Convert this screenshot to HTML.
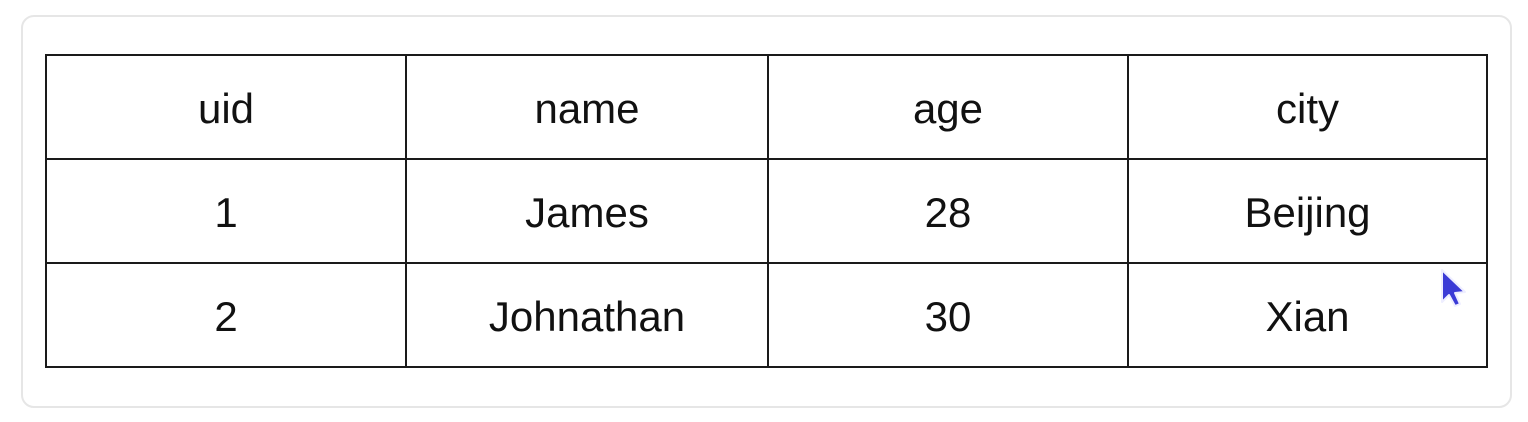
<!DOCTYPE html>
<html><head><style>
html,body{margin:0;padding:0;background:#fff;width:1528px;height:422px;overflow:hidden}
.card{position:absolute;left:21px;top:15px;width:1491px;height:393px;border:2px solid #e6e6e6;border-radius:13px;box-sizing:border-box}
table{position:absolute;left:45px;top:54px;border-collapse:collapse;font-family:"Liberation Sans",sans-serif;font-size:42px;color:#111}
td{border:2px solid #1a1a1a;text-align:center;padding:3px 0 0 0;height:99px}
</style></head><body>
<div class="card"></div>
<table>
<tr><td style="width:358px">uid</td><td style="width:360px">name</td><td style="width:358px">age</td><td style="width:357px">city</td></tr>
<tr><td>1</td><td>James</td><td>28</td><td>Beijing</td></tr>
<tr><td>2</td><td>Johnathan</td><td>30</td><td>Xian</td></tr>
</table>
<svg style="position:absolute;left:1437px;top:266px" width="36" height="46" viewBox="0 0 36 46">
<path d="M5 4 L5 36 L12 29 L18 40 L23 38 L18 27 L28 26 Z" fill="#3b3bd6" stroke="#eef" stroke-width="2" stroke-linejoin="round"/>
</svg>
</body></html>
